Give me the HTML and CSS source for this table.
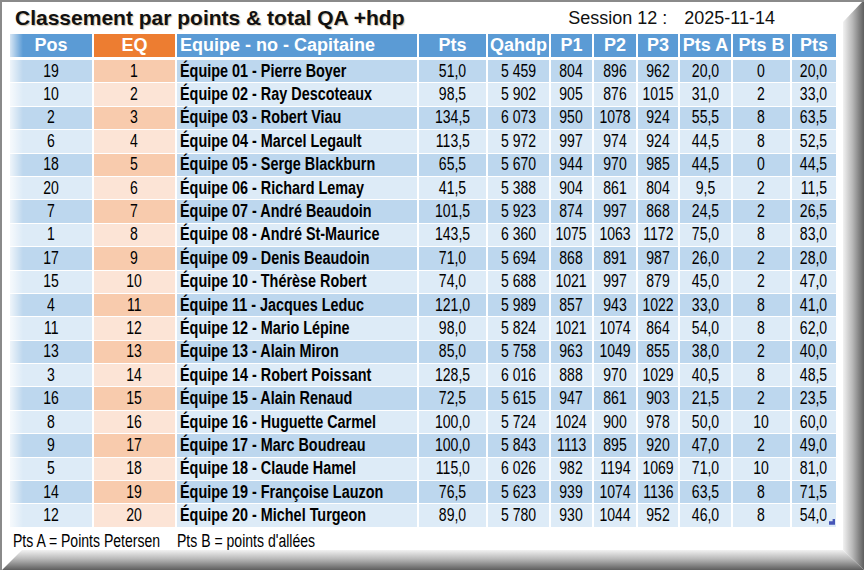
FILE: index.html
```html
<!DOCTYPE html>
<html lang="fr">
<head>
<meta charset="utf-8">
<title>Classement par points</title>
<link rel="stylesheet" href="styles.css">
</head>
<body>
<div class="frame">
  <div class="sheet">
    <div class="top">
      <h1 class="title">Classement par points &amp; total QA +hdp</h1>
      <div class="session"><span>Session 12 :</span><span>2025-11-14</span></div>
    </div>
    <div class="grid">
      <div class="row head">
        <div class="c pos">Pos</div><div class="c eq">EQ</div><div class="c name">Equipe - no - Capitaine</div><div class="c">Pts</div><div class="c">Qahdp</div><div class="c">P1</div><div class="c">P2</div><div class="c">P3</div><div class="c">Pts A</div><div class="c">Pts B</div><div class="c">Pts</div>
      </div>
      <div class="row odd"><div class="c pos"><span class="t">19</span></div><div class="c eq"><span class="t">1</span></div><div class="c name"><span class="t">Équipe 01 - Pierre Boyer</span></div><div class="c"><span class="t">51,0</span></div><div class="c"><span class="t">5 459</span></div><div class="c"><span class="t">804</span></div><div class="c"><span class="t">896</span></div><div class="c"><span class="t">962</span></div><div class="c"><span class="t">20,0</span></div><div class="c"><span class="t">0</span></div><div class="c"><span class="t">20,0</span></div></div>
      <div class="row even"><div class="c pos"><span class="t">10</span></div><div class="c eq"><span class="t">2</span></div><div class="c name"><span class="t">Équipe 02 - Ray Descoteaux</span></div><div class="c"><span class="t">98,5</span></div><div class="c"><span class="t">5 902</span></div><div class="c"><span class="t">905</span></div><div class="c"><span class="t">876</span></div><div class="c"><span class="t">1015</span></div><div class="c"><span class="t">31,0</span></div><div class="c"><span class="t">2</span></div><div class="c"><span class="t">33,0</span></div></div>
      <div class="row odd"><div class="c pos"><span class="t">2</span></div><div class="c eq"><span class="t">3</span></div><div class="c name"><span class="t">Équipe 03 - Robert Viau</span></div><div class="c"><span class="t">134,5</span></div><div class="c"><span class="t">6 073</span></div><div class="c"><span class="t">950</span></div><div class="c"><span class="t">1078</span></div><div class="c"><span class="t">924</span></div><div class="c"><span class="t">55,5</span></div><div class="c"><span class="t">8</span></div><div class="c"><span class="t">63,5</span></div></div>
      <div class="row even"><div class="c pos"><span class="t">6</span></div><div class="c eq"><span class="t">4</span></div><div class="c name"><span class="t">Équipe 04 - Marcel Legault</span></div><div class="c"><span class="t">113,5</span></div><div class="c"><span class="t">5 972</span></div><div class="c"><span class="t">997</span></div><div class="c"><span class="t">974</span></div><div class="c"><span class="t">924</span></div><div class="c"><span class="t">44,5</span></div><div class="c"><span class="t">8</span></div><div class="c"><span class="t">52,5</span></div></div>
      <div class="row odd"><div class="c pos"><span class="t">18</span></div><div class="c eq"><span class="t">5</span></div><div class="c name"><span class="t">Équipe 05 - Serge Blackburn</span></div><div class="c"><span class="t">65,5</span></div><div class="c"><span class="t">5 670</span></div><div class="c"><span class="t">944</span></div><div class="c"><span class="t">970</span></div><div class="c"><span class="t">985</span></div><div class="c"><span class="t">44,5</span></div><div class="c"><span class="t">0</span></div><div class="c"><span class="t">44,5</span></div></div>
      <div class="row even"><div class="c pos"><span class="t">20</span></div><div class="c eq"><span class="t">6</span></div><div class="c name"><span class="t">Équipe 06 - Richard Lemay</span></div><div class="c"><span class="t">41,5</span></div><div class="c"><span class="t">5 388</span></div><div class="c"><span class="t">904</span></div><div class="c"><span class="t">861</span></div><div class="c"><span class="t">804</span></div><div class="c"><span class="t">9,5</span></div><div class="c"><span class="t">2</span></div><div class="c"><span class="t">11,5</span></div></div>
      <div class="row odd"><div class="c pos"><span class="t">7</span></div><div class="c eq"><span class="t">7</span></div><div class="c name"><span class="t">Équipe 07 - André Beaudoin</span></div><div class="c"><span class="t">101,5</span></div><div class="c"><span class="t">5 923</span></div><div class="c"><span class="t">874</span></div><div class="c"><span class="t">997</span></div><div class="c"><span class="t">868</span></div><div class="c"><span class="t">24,5</span></div><div class="c"><span class="t">2</span></div><div class="c"><span class="t">26,5</span></div></div>
      <div class="row even"><div class="c pos"><span class="t">1</span></div><div class="c eq"><span class="t">8</span></div><div class="c name"><span class="t">Équipe 08 - André St-Maurice</span></div><div class="c"><span class="t">143,5</span></div><div class="c"><span class="t">6 360</span></div><div class="c"><span class="t">1075</span></div><div class="c"><span class="t">1063</span></div><div class="c"><span class="t">1172</span></div><div class="c"><span class="t">75,0</span></div><div class="c"><span class="t">8</span></div><div class="c"><span class="t">83,0</span></div></div>
      <div class="row odd"><div class="c pos"><span class="t">17</span></div><div class="c eq"><span class="t">9</span></div><div class="c name"><span class="t">Équipe 09 - Denis Beaudoin</span></div><div class="c"><span class="t">71,0</span></div><div class="c"><span class="t">5 694</span></div><div class="c"><span class="t">868</span></div><div class="c"><span class="t">891</span></div><div class="c"><span class="t">987</span></div><div class="c"><span class="t">26,0</span></div><div class="c"><span class="t">2</span></div><div class="c"><span class="t">28,0</span></div></div>
      <div class="row even"><div class="c pos"><span class="t">15</span></div><div class="c eq"><span class="t">10</span></div><div class="c name"><span class="t">Équipe 10 - Thérèse Robert</span></div><div class="c"><span class="t">74,0</span></div><div class="c"><span class="t">5 688</span></div><div class="c"><span class="t">1021</span></div><div class="c"><span class="t">997</span></div><div class="c"><span class="t">879</span></div><div class="c"><span class="t">45,0</span></div><div class="c"><span class="t">2</span></div><div class="c"><span class="t">47,0</span></div></div>
      <div class="row odd"><div class="c pos"><span class="t">4</span></div><div class="c eq"><span class="t">11</span></div><div class="c name"><span class="t">Équipe 11 - Jacques Leduc</span></div><div class="c"><span class="t">121,0</span></div><div class="c"><span class="t">5 989</span></div><div class="c"><span class="t">857</span></div><div class="c"><span class="t">943</span></div><div class="c"><span class="t">1022</span></div><div class="c"><span class="t">33,0</span></div><div class="c"><span class="t">8</span></div><div class="c"><span class="t">41,0</span></div></div>
      <div class="row even"><div class="c pos"><span class="t">11</span></div><div class="c eq"><span class="t">12</span></div><div class="c name"><span class="t">Équipe 12 - Mario Lépine</span></div><div class="c"><span class="t">98,0</span></div><div class="c"><span class="t">5 824</span></div><div class="c"><span class="t">1021</span></div><div class="c"><span class="t">1074</span></div><div class="c"><span class="t">864</span></div><div class="c"><span class="t">54,0</span></div><div class="c"><span class="t">8</span></div><div class="c"><span class="t">62,0</span></div></div>
      <div class="row odd"><div class="c pos"><span class="t">13</span></div><div class="c eq"><span class="t">13</span></div><div class="c name"><span class="t">Équipe 13 - Alain Miron</span></div><div class="c"><span class="t">85,0</span></div><div class="c"><span class="t">5 758</span></div><div class="c"><span class="t">963</span></div><div class="c"><span class="t">1049</span></div><div class="c"><span class="t">855</span></div><div class="c"><span class="t">38,0</span></div><div class="c"><span class="t">2</span></div><div class="c"><span class="t">40,0</span></div></div>
      <div class="row even"><div class="c pos"><span class="t">3</span></div><div class="c eq"><span class="t">14</span></div><div class="c name"><span class="t">Équipe 14 - Robert Poissant</span></div><div class="c"><span class="t">128,5</span></div><div class="c"><span class="t">6 016</span></div><div class="c"><span class="t">888</span></div><div class="c"><span class="t">970</span></div><div class="c"><span class="t">1029</span></div><div class="c"><span class="t">40,5</span></div><div class="c"><span class="t">8</span></div><div class="c"><span class="t">48,5</span></div></div>
      <div class="row odd"><div class="c pos"><span class="t">16</span></div><div class="c eq"><span class="t">15</span></div><div class="c name"><span class="t">Équipe 15 - Alain Renaud</span></div><div class="c"><span class="t">72,5</span></div><div class="c"><span class="t">5 615</span></div><div class="c"><span class="t">947</span></div><div class="c"><span class="t">861</span></div><div class="c"><span class="t">903</span></div><div class="c"><span class="t">21,5</span></div><div class="c"><span class="t">2</span></div><div class="c"><span class="t">23,5</span></div></div>
      <div class="row even"><div class="c pos"><span class="t">8</span></div><div class="c eq"><span class="t">16</span></div><div class="c name"><span class="t">Équipe 16 - Huguette Carmel</span></div><div class="c"><span class="t">100,0</span></div><div class="c"><span class="t">5 724</span></div><div class="c"><span class="t">1024</span></div><div class="c"><span class="t">900</span></div><div class="c"><span class="t">978</span></div><div class="c"><span class="t">50,0</span></div><div class="c"><span class="t">10</span></div><div class="c"><span class="t">60,0</span></div></div>
      <div class="row odd"><div class="c pos"><span class="t">9</span></div><div class="c eq"><span class="t">17</span></div><div class="c name"><span class="t">Équipe 17 - Marc Boudreau</span></div><div class="c"><span class="t">100,0</span></div><div class="c"><span class="t">5 843</span></div><div class="c"><span class="t">1113</span></div><div class="c"><span class="t">895</span></div><div class="c"><span class="t">920</span></div><div class="c"><span class="t">47,0</span></div><div class="c"><span class="t">2</span></div><div class="c"><span class="t">49,0</span></div></div>
      <div class="row even"><div class="c pos"><span class="t">5</span></div><div class="c eq"><span class="t">18</span></div><div class="c name"><span class="t">Équipe 18 - Claude Hamel</span></div><div class="c"><span class="t">115,0</span></div><div class="c"><span class="t">6 026</span></div><div class="c"><span class="t">982</span></div><div class="c"><span class="t">1194</span></div><div class="c"><span class="t">1069</span></div><div class="c"><span class="t">71,0</span></div><div class="c"><span class="t">10</span></div><div class="c"><span class="t">81,0</span></div></div>
      <div class="row odd"><div class="c pos"><span class="t">14</span></div><div class="c eq"><span class="t">19</span></div><div class="c name"><span class="t">Équipe 19 - Françoise Lauzon</span></div><div class="c"><span class="t">76,5</span></div><div class="c"><span class="t">5 623</span></div><div class="c"><span class="t">939</span></div><div class="c"><span class="t">1074</span></div><div class="c"><span class="t">1136</span></div><div class="c"><span class="t">63,5</span></div><div class="c"><span class="t">8</span></div><div class="c"><span class="t">71,5</span></div></div>
      <div class="row even"><div class="c pos"><span class="t">12</span></div><div class="c eq"><span class="t">20</span></div><div class="c name"><span class="t">Équipe 20 - Michel Turgeon</span></div><div class="c"><span class="t">89,0</span></div><div class="c"><span class="t">5 780</span></div><div class="c"><span class="t">930</span></div><div class="c"><span class="t">1044</span></div><div class="c"><span class="t">952</span></div><div class="c"><span class="t">46,0</span></div><div class="c"><span class="t">8</span></div><div class="c last"><span class="t">54,0</span><span class="handle"></span></div></div>
      <div class="legend">
        <div class="note a"><span class="t">Pts A = Points Petersen</span></div>
        <div class="note b"><span class="t">Pts B = points d'allées</span></div>
      </div>
    </div>
  </div>
</div>
</body>
</html>
```

FILE: styles.css
```css
html, body {
  margin: 0;
  padding: 0;
  background: #ffffff;
}

.frame {
  position: relative;
  width: 864px;
  height: 570px;
  box-sizing: border-box;
  border-top: 2px solid #8a8a8a;
  border-left: 2px solid #8a8a8a;
  background: #ffffff;
  overflow: hidden;
}

.frame::before {
  content: "";
  position: absolute;
  top: -2px;
  right: 0;
  width: 21px;
  height: 570px;
  background: linear-gradient(to right, #f2f2f2, #b8b8b8 45%, #5e5e5e);
  clip-path: polygon(0 22px, 100% 0, 100% 100%, 0 calc(100% - 20px));
}

.frame::after {
  content: "";
  position: absolute;
  left: -2px;
  bottom: 0;
  width: 864px;
  height: 20px;
  background: linear-gradient(to bottom, #f2f2f2, #b8b8b8 45%, #5e5e5e);
  clip-path: polygon(22px 0, calc(100% - 21px) 0, 100% 100%, 2px 100%);
}

.sheet {
  padding-left: 8px;
}

.top {
  height: 32px;
  display: flex;
  align-items: center;
}

.title {
  margin: 0 0 0 5px;
  font-family: "Liberation Sans", Arial, sans-serif;
  font-weight: bold;
  font-size: 21px;
  color: #111;
  text-shadow: 1px 1px 1px rgba(120, 80, 20, 0.35);
}

.session {
  margin-left: auto;
  margin-right: 89px;
  display: flex;
  gap: 17px;
  font-family: "Liberation Sans", Arial, sans-serif;
  font-size: 18px;
  color: #111;
}

.grid {
  display: grid;
  grid-template-columns: 82px 81px 240px 67px 61px 41px 42px 40px 51px 57px 44px;
  grid-template-rows: 25px repeat(20, 22.4px) auto;
  column-gap: 2px;
  row-gap: 1px;
}

.row {
  display: contents;
}

.c {
  display: flex;
  align-items: center;
  justify-content: center;
  font-family: "Liberation Sans", Arial, sans-serif;
  font-size: 18px;
  color: #000;
  white-space: nowrap;
}

.t {
  display: inline-block;
  font-family: "Liberation Sans", Arial, sans-serif;
  font-size: 18px;
  white-space: nowrap;
  transform: scaleX(0.78);
  transform-origin: center;
}

.c.name {
  justify-content: flex-start;
  padding-left: 3px;
  font-weight: bold;
}

.c.name .t {
  transform: scaleX(0.8);
  transform-origin: left center;
}

.head .c {
  height: 23px;
  background: #5b9bd5;
  color: #fff;
  font-weight: bold;
  font-size: 18px;
}

.head .c.eq {
  background: #ed7d31;
}

.odd .c {
  background: #bdd7ee;
}

.even .c {
  background: #ddebf7;
}

.odd .c.eq {
  background: #f8cbad;
}

.even .c.eq {
  background: #fce4d6;
}

.c.pos {
  background-image: linear-gradient(to right, rgba(255, 255, 255, 0.75), rgba(255, 255, 255, 0) 13px);
}

.c.last {
  position: relative;
}

.handle {
  position: absolute;
  right: 1px;
  bottom: 2px;
  width: 6px;
  height: 6px;
  background: #4656b8;
  clip-path: polygon(100% 0, 100% 100%, 0 100%, 0 40%, 60% 40%, 60% 0);
}

.legend {
  grid-column: 1 / -1;
  display: grid;
  grid-template-columns: 167px auto;
  padding-top: 3px;
  color: #000;
}

.note .t {
  transform-origin: left center;
}

.note.a {
  padding-left: 3px;
}
```
